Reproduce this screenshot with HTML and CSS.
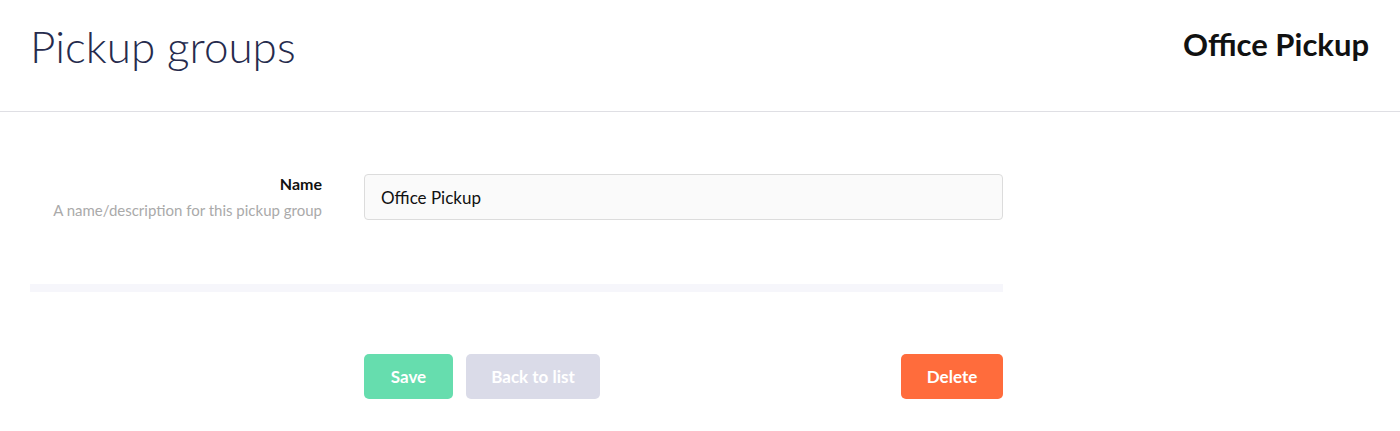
FILE: index.html
```html
<!DOCTYPE html>
<html>
<head>
    <meta charset="UTF-8">
    <title>Pickup groups</title>
    <link rel="stylesheet" href="styles.css">
</head>
<body>
    <div id="header">
        <h1 class="page-title">Pickup groups</h1>
        <h2 class="record-title">Office Pickup</h2>
    </div>

    <div id="content">
        <div class="form-row">
            <div class="form-label">
                <label for="name">Name</label>
                <p class="form-help">A name/description for this pickup group</p>
            </div>
            <input class="form-input" id="name" type="text" value="Office Pickup">
        </div>

        <div class="divider"></div>

        <div class="actions">
            <button class="btn btn-save">Save</button>
            <button class="btn btn-back">Back to list</button>
            <button class="btn btn-delete">Delete</button>
        </div>
    </div>
</body>
</html>
```

FILE: styles.css
```css
body {
    margin: 0;
    font-family: 'Lato', 'Open Sans', sans-serif;
    background-color: #fff;
    color: #111;
}

#header {
    display: flex;
    justify-content: space-between;
    align-items: center;
    height: 111px;
    padding: 0 31px 0 30px;
    border-bottom: 1px solid #dfdfe4;
}

.page-title {
    margin: 0;
    font-size: 44px;
    font-weight: 300;
    color: #262b4d;
    padding-bottom: 20px;
}

.record-title {
    margin: 0;
    font-size: 31px;
    font-weight: bold;
    color: #111;
    padding-bottom: 24px;
}

#content {
    width: 973px;
    padding: 62px 0 0 30px;
}

.form-row {
    display: flex;
    align-items: flex-start;
    gap: 42px;
}

.form-label {
    width: 292px;
    text-align: right;
}

.form-label label {
    display: block;
    font-size: 16px;
    font-weight: bold;
    color: #111;
}

.form-help {
    margin: 8px 0 0;
    font-size: 15px;
    color: #aaa;
}

.form-input {
    flex: 1;
    box-sizing: border-box;
    height: 46px;
    padding: 0 16px;
    font-family: inherit;
    font-size: 17px;
    color: #111;
    background-color: #fafafa;
    border: 1px solid #dcdcdc;
    border-radius: 4px;
}

.divider {
    height: 8px;
    margin-top: 64px;
    background-color: #f6f6fb;
}

.actions {
    display: flex;
    gap: 13px;
    margin-top: 62px;
    padding-left: 334px;
}

.btn {
    height: 45px;
    padding: 0;
    font-family: inherit;
    font-size: 17px;
    font-weight: bold;
    color: #fff;
    border: none;
    border-radius: 5px;
    cursor: pointer;
}

.btn-save {
    width: 89px;
    background-color: #66ddae;
}

.btn-back {
    width: 134px;
    background-color: #dadbe8;
}

.btn-delete {
    width: 102px;
    margin-left: auto;
    background-color: #ff6c3c;
}
```
